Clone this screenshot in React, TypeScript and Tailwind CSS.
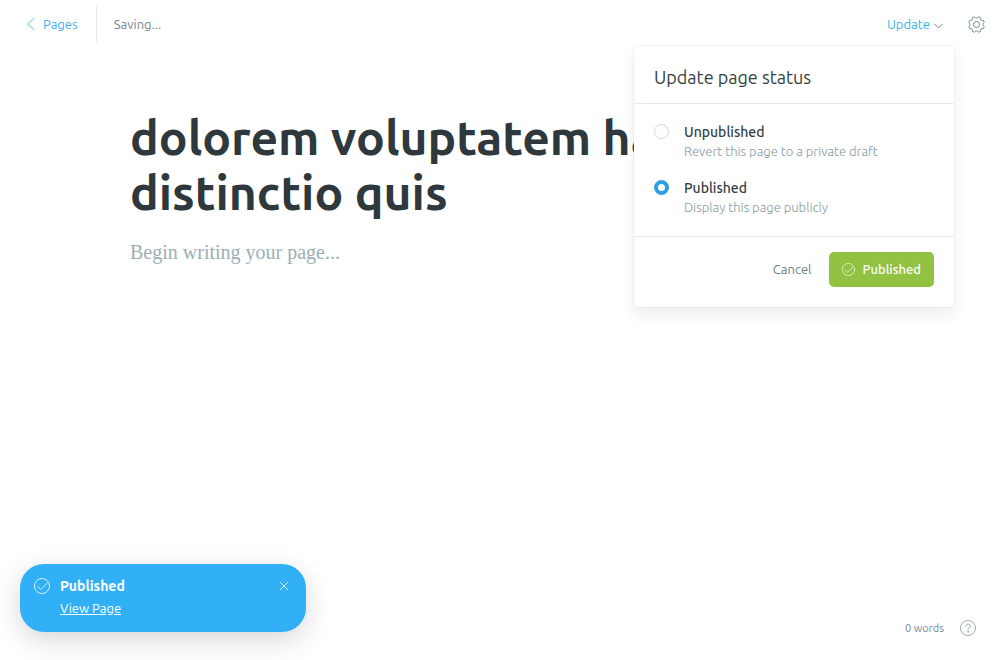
import { useState } from "react";

function CheckCircle({ className }: { className: string }) {
  return (
    <svg viewBox="0 0 24 24" className={className} fill="none" stroke="currentColor" strokeWidth="1.2" strokeLinecap="round" strokeLinejoin="round" aria-hidden="true">
      <circle cx="12" cy="12" r="11.3" />
      <path d="M6 13.2l3.3 3.3c.5.5 1.1.5 1.6 0L20 7.500" />
    </svg>
  );
}

function GearIcon() {
  return (
    <svg viewBox="0 0 24 24" className="size-[17px]" fill="none" stroke="currentColor" strokeWidth="1.4" strokeLinejoin="round" aria-hidden="true">
      <circle cx="12" cy="12" r="4.2" />
      <path d="M22.91 9.08A3.300 3.300 0 0 0 22.910 14.920L21.790 17.650A3.300 3.300 0 0 0 17.650 21.790L14.920 22.910A3.300 3.300 0 0 0 9.080 22.910L6.350 21.790A3.300 3.300 0 0 0 2.210 17.650L1.090 14.920A3.300 3.300 0 0 0 1.090 9.080L2.210 6.350A3.300 3.300 0 0 0 6.350 2.210L9.080 1.090A3.300 3.300 0 0 0 14.920 1.090L17.650 2.210A3.300 3.300 0 0 0 21.790 6.350Z" />
    </svg>
  );
}

type Status = "draft" | "published";

const options: { value: Status; label: string; hint: string }[] = [
  { value: "draft", label: "Unpublished", hint: "Revert this page to a private draft" },
  { value: "published", label: "Published", hint: "Display this page publicly" },
];

function StatusMenu() {
  const [status, setStatus] = useState<Status>("published");
  return (
    <section className="absolute right-[-11px] top-full z-10 mt-[9px] w-80 rounded bg-white pb-5 shadow-[0_0_0_1px_rgba(99,114,130,0.07),0_8px_16px_rgba(27,39,51,0.08)]">
      <h2 className="border-b border-[#e3ecf3] px-5 pt-[19px] pb-[13px] text-lg leading-[25px] text-[#343f44]">Update page status</h2>
      <fieldset className="flex flex-col gap-[18px] border-b border-[#e3ecf3] px-5 pt-[18px] pb-5">
        {options.map((o) => (
          <label key={o.value} className="flex gap-[15px]">
            <input
              type="radio"
              name="status"
              checked={status === o.value}
              onChange={() => setStatus(o.value)}
              className="mt-[2px] size-[15px] shrink-0 appearance-none rounded-full border border-[#c5d9e8] bg-white checked:border-4 checked:border-[#2f9fe4]"
            />
            <span className="flex flex-col">
              <span className="text-sm leading-5 font-medium text-[#343f44]">{o.label}</span>
              <span className="text-[13px] leading-[18px] font-light text-[#8599a3]">{o.hint}</span>
            </span>
          </label>
        ))}
      </fieldset>
      <div className="flex items-center justify-end gap-[18px] px-5 pt-[15px] text-[13px]">
        <button type="button" className="text-[#6a818b]">Cancel</button>
        <button type="button" className="flex h-[35px] items-center gap-[7px] rounded-[5px] bg-[#92c242] px-[13px] font-medium text-white">
          <CheckCircle className="size-[13px]" />
          Published
        </button>
      </div>
    </section>
  );
}

export default function App() {
  const [title, setTitle] = useState("dolorem voluptatem harum distinctio quis");
  return (
    <div className="flex min-h-screen flex-col bg-white font-['Ubuntu','Noto_Sans',sans-serif]">
      <header className="flex items-center justify-between pt-[6px] pr-[15px] pl-[26px] text-[13px]">
        <div className="flex h-9 items-center">
          <a href="#pages" className="flex h-9 items-center gap-[7px] border-r border-[#dfebf3] pr-[18px] text-[#3eb0ef]">
            <svg viewBox="0 0 10 14" className="h-[14px] w-[10px]" fill="none" stroke="currentColor" strokeWidth="0.8" aria-hidden="true">
              <path d="M8.500 1L1.500 7l7 6" />
            </svg>
            <span className="pt-px">Pages</span>
          </a>
          <span className="pt-px pl-[17px] text-[#738a94]">Saving...</span>
        </div>
        <div className="flex items-center gap-[25px]">
          <div className="relative">
            <button type="button" className="flex h-[26px] items-center gap-1 pt-px text-[#3eb0ef]">
              Update
              <svg viewBox="0 0 9 6" className="mt-[2px] h-[6px] w-[9px] text-[#738a94]" fill="none" stroke="currentColor" aria-hidden="true">
                <path d="M.5 1l4 4 4-4" />
              </svg>
            </button>
            <StatusMenu />
          </div>
          <button type="button" aria-label="Settings" className="text-[#738a94]">
            <GearIcon />
          </button>
        </div>
      </header>

      <main className="mx-auto flex w-full max-w-[740px] grow flex-col gap-4 pt-[68px]">
        <textarea
          aria-label="Page title"
          rows={2}
          value={title}
          onChange={(e) => setTitle(e.target.value)}
          className="resize-none overflow-hidden text-5xl leading-[55px] font-bold text-[#2e383d] outline-none"
        />
        <textarea
          aria-label="Page content"
          rows={4}
          placeholder="Begin writing your page..."
          className="resize-none font-['Liberation_Serif',serif] text-xl leading-8 text-[#343f44] outline-none placeholder:text-[#9baeb8]"
        />
      </main>

      <footer className="flex items-end justify-between pr-6 pb-6 pl-5">
        <aside role="status" className="mb-1 flex w-[286px] items-start rounded-3xl bg-[#31aff7] pt-3 pr-[17px] pb-[13px] pl-[14px] text-white shadow-[0_8px_28px_rgba(0,0,0,0.16)]">
          <CheckCircle className="mt-[2px] mr-[10px] size-4 shrink-0" />
          <div className="flex grow flex-col">
            <strong className="text-sm leading-5 font-bold">Published</strong>
            <a href="#view" className="mt-px text-[13px] leading-[22px] underline">View Page</a>
          </div>
          <button type="button" aria-label="Close" className="mt-[5px]">
            <svg viewBox="0 0 10 10" className="size-[10px]" fill="none" stroke="currentColor" strokeWidth="0.8" aria-hidden="true">
              <path d="M1 1l8 8M9 1L1 9" />
            </svg>
          </button>
        </aside>
        <div className="flex items-center gap-4 text-[11px] text-[#738a94]">
          <span>0 words</span>
          <button type="button" aria-label="Help" className="text-[#8fa3ad]">
            <svg viewBox="0 0 16 16" className="size-4" fill="none" stroke="currentColor" strokeWidth="0.9" strokeLinecap="round" aria-hidden="true">
              <circle cx="8" cy="8" r="7.500" />
              <path d="M5.800 6.200a2.200 2.200 0 1 1 3.400 1.800c-.8.5-1.200.8-1.200 1.700" />
              <circle cx="8" cy="11.800" r=".4" />
            </svg>
          </button>
        </div>
      </footer>
    </div>
  );
}
